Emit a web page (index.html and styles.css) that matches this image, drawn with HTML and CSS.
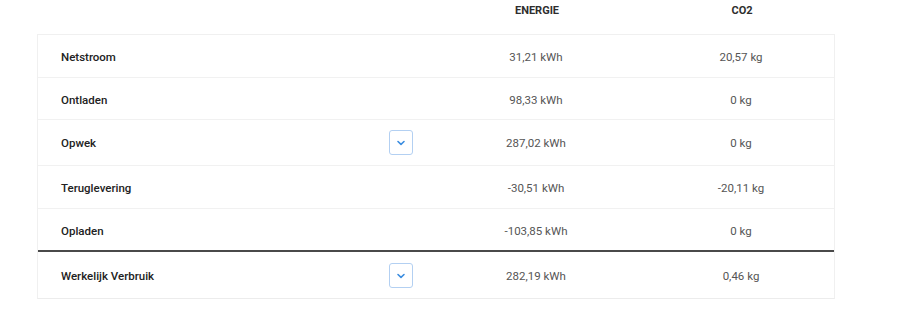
FILE: index.html
```html
<!DOCTYPE html>
<html lang="nl">
<head>
<meta charset="utf-8">
<link rel="stylesheet" href="styles.css">
<title>Energie</title>
</head>
<body>
<div class="wrap">
  <div class="head row">
    <div class="label"></div>
    <div class="col">ENERGIE</div>
    <div class="col">CO2</div>
  </div>
  <div class="table">
    <div class="row line">
      <div class="label">Netstroom</div>
      <div class="col val">31,21 kWh</div>
      <div class="col val">20,57 kg</div>
    </div>
    <div class="row line short">
      <div class="label">Ontladen</div>
      <div class="col val">98,33 kWh</div>
      <div class="col val">0 kg</div>
    </div>
    <div class="row line tall">
      <div class="label">Opwek<button class="toggle" type="button" aria-label="Uitklappen"><svg width="10" height="6" viewBox="0 0 10 6"><path d="M2 1.5 L5 4.3 L8 1.5" fill="none" stroke="#3b8de0" stroke-width="1.6" stroke-linecap="round" stroke-linejoin="round"/></svg></button></div>
      <div class="col val">287,02 kWh</div>
      <div class="col val">0 kg</div>
    </div>
    <div class="row line">
      <div class="label">Teruglevering</div>
      <div class="col val">-30,51 kWh</div>
      <div class="col val">-20,11 kg</div>
    </div>
    <div class="row total-above">
      <div class="label">Opladen</div>
      <div class="col val">-103,85 kWh</div>
      <div class="col val">0 kg</div>
    </div>
    <div class="row last">
      <div class="label">Werkelijk Verbruik<button class="toggle" type="button" aria-label="Uitklappen"><svg width="10" height="6" viewBox="0 0 10 6"><path d="M2 1.5 L5 4.3 L8 1.5" fill="none" stroke="#3b8de0" stroke-width="1.6" stroke-linecap="round" stroke-linejoin="round"/></svg></button></div>
      <div class="col val">282,19 kWh</div>
      <div class="col val">0,46 kg</div>
    </div>
  </div>
</div>
</body>
</html>
```

FILE: styles.css
```css
* { box-sizing: border-box; }
html, body { margin: 0; padding: 0; background: #fff; }
body {
  font-family: Roboto, "Liberation Sans", sans-serif;
  font-size: 11.5px;
  color: #333;
}
.wrap {
  width: 798px;
  margin-left: 37px;
}
.row {
  display: grid;
  grid-template-columns: 1fr 200px 186px;
  column-gap: 12px;
  align-items: center;
}
.head {
  height: 34px;
  align-items: start;
  padding-top: 4px;
  font-weight: 700;
  color: #2e2e2e;
  font-size: 11px;
}
.col { text-align: center; }
.table {
  border: 1px solid #f0f0f0;
  border-bottom-color: #ececec;
}
.table .row { height: 43px; padding-top: 2px; }
.table .row.short { height: 42px; }
.table .row.tall { height: 46px; padding-top: 0; }
.table .row.last { height: 46px; padding-top: 1px; }
.line { border-bottom: 1px solid #f1f1f1; }
.table .total-above { border-bottom: 2px solid #4a4a4a; height: 43px; }
.label {
  display: flex;
  align-items: center;
  justify-content: space-between;
  padding-left: 23px;
  padding-right: 11px;
  font-weight: 500;
  color: #222;
}
.val { color: #555; font-weight: 400; }
.toggle {
  width: 24px;
  height: 25px;
  padding: 0;
  margin: 0;
  border: 1px solid #b3d0f2;
  border-radius: 3px;
  background: #fff;
  display: flex;
  align-items: center;
  justify-content: center;
}
.toggle svg { display: block; }
```
